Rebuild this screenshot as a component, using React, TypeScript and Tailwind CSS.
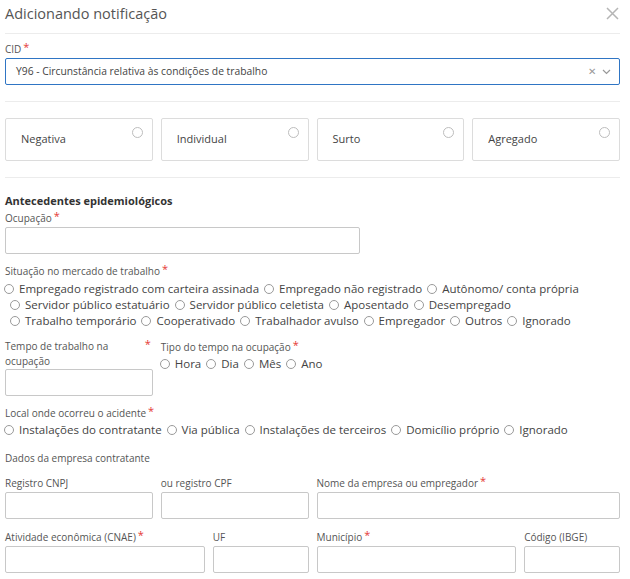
import React from 'react';

const Req = () => <span className="text-[#e53935] text-[11px] align-top relative -top-[3px] ml-[2px]">*</span>;

function Label({ children, req, className = '' }: { children: React.ReactNode; req?: boolean; className?: string }) {
  return (
    <div className={`text-[10px] leading-[13px] text-[#555] ${className || 'mb-[2px]'}`}>
      {children}
      {req && <Req />}
    </div>
  );
}

const Input = ({ className = '' }: { className?: string }) => (
  <div className={`h-[27px] border border-[#c8c8c8] rounded-[2px] bg-white ${className}`} />
);

function Radio({ label }: { label: string }) {
  return (
    <span className="inline-flex items-center mr-[5px]">
      <span className="w-[10px] h-[10px] rounded-full border border-[#9a9a9a] mr-[5px] shrink-0" />
      <span>{label}</span>
    </span>
  );
}

const Divider = () => <div className="h-px bg-[#ececec]" />;

export default function App() {
  const cards = ['Negativa', 'Individual', 'Surto', 'Agregado'];
  return (
    <div className="w-[630px] h-[579px] bg-white overflow-hidden" style={{ fontFamily: '"Open Sans", sans-serif' }}>
      <div className="pl-[5px] pr-[10px]">
        {/* Header */}
        <div className="flex items-center justify-between h-[33px] pb-[6px]">
          <h1 className="text-[14.5px] text-[#555] leading-[20px]">Adicionando notificação</h1>
          <svg width="13" height="13" viewBox="0 0 13 13" className="mr-[1px]">
            <path d="M1 1L12 12M12 1L1 12" stroke="#b5b5b5" strokeWidth="1.5" />
          </svg>
        </div>
        <Divider />

        {/* CID */}
        <div className="pt-[9px]">
          <Label req>CID</Label>
          <div className="h-[27px] border border-[#2f75c4] rounded-[2px] flex items-center pl-[10px] pr-[8px]">
            <span className="flex-1 text-[10.3px] text-[#444]">Y96 - Circunstância relativa às condições de trabalho</span>
            <span className="text-[#999] text-[10px] mr-[6px]">✕</span>
            <svg width="9" height="6" viewBox="0 0 9 6">
              <path d="M1 1L4.5 4.5L8 1" stroke="#999" strokeWidth="1.2" fill="none" />
            </svg>
          </div>
        </div>
        <div className="mt-[16px]">
          <Divider />
        </div>

        {/* Tipo */}
        <div className="grid grid-cols-4 gap-[8px] mt-[16px]">
          {cards.map((c) => (
            <div key={c} className="relative h-[43px] border border-[#dcdcdc] rounded-[2px] flex items-center pl-[15px] text-[11px] text-[#444]">
              {c}
              <span className="absolute right-[9px] top-[8px] w-[11px] h-[11px] rounded-full border border-[#bdbdbd]" />
            </div>
          ))}
        </div>
        <div className="mt-[16px]">
          <Divider />
        </div>

        {/* Antecedentes */}
        <div className="mt-[15px] text-[11px] font-bold text-[#333] leading-[15px]">Antecedentes epidemiológicos</div>
        <div className="grid grid-cols-12 gap-x-[8px] mt-[4px]">
          <div className="col-span-7">
            <Label req>Ocupação</Label>
            <Input />
          </div>
        </div>

        <Label req className="mt-[11px] mb-[3px]">Situação no mercado de trabalho</Label>
        <div className="text-[11.5px] text-[#444] leading-[16px] -ml-[1px]">
          <div className="flex">
            <Radio label="Empregado registrado com carteira assinada" />
            <Radio label="Empregado não registrado" />
            <Radio label="Autônomo/ conta própria" />
          </div>
          <div className="flex pl-[6px]">
            <Radio label="Servidor público estatuário" />
            <Radio label="Servidor público celetista" />
            <Radio label="Aposentado" />
            <Radio label="Desempregado" />
          </div>
          <div className="flex pl-[6px]">
            <Radio label="Trabalho temporário" />
            <Radio label="Cooperativado" />
            <Radio label="Trabalhador avulso" />
            <Radio label="Empregador" />
            <Radio label="Outros" />
            <Radio label="Ignorado" />
          </div>
        </div>

        <div className="grid grid-cols-12 gap-x-[8px] mt-[10px]">
          <div className="col-span-3">
            <div className="flex text-[10px] leading-[15px] text-[#555] h-[30px]">
              <span className="w-[115px]">Tempo de trabalho na ocupação</span>
              <span className="flex-1" />
              <span className="text-[#e53935] text-[11px] relative -top-[3px] mr-[2px]">*</span>
            </div>
            <Input />
          </div>
          <div className="col-span-9">
            <Label req className="mt-[2px] mb-[2px]">Tipo do tempo na ocupação</Label>
            <div className="text-[11.5px] text-[#444] leading-[16px] flex -ml-[1px]">
              <Radio label="Hora" />
              <Radio label="Dia" />
              <Radio label="Mês" />
              <Radio label="Ano" />
            </div>
          </div>
        </div>

        <Label req className="mt-[11px] mb-[2px]">Local onde ocorreu o acidente</Label>
        <div className="text-[11.5px] text-[#444] leading-[16px] flex -ml-[1px]">
          <Radio label="Instalações do contratante" />
          <Radio label="Via pública" />
          <Radio label="Instalações de terceiros" />
          <Radio label="Domicílio próprio" />
          <Radio label="Ignorado" />
        </div>

        <Label className="mt-[14px] mb-[2px]">Dados da empresa contratante</Label>

        <div className="grid grid-cols-12 gap-x-[8px] gap-y-[12px] mt-[12px]">
          <div className="col-span-3">
            <Label>Registro CNPJ</Label>
            <Input />
          </div>
          <div className="col-span-3">
            <Label>ou registro CPF</Label>
            <Input />
          </div>
          <div className="col-span-6">
            <Label req>Nome da empresa ou empregador</Label>
            <Input />
          </div>
          <div className="col-span-4">
            <Label req>Atividade econômica (CNAE)</Label>
            <Input />
          </div>
          <div className="col-span-2">
            <Label>UF</Label>
            <Input />
          </div>
          <div className="col-span-4">
            <Label req>Município</Label>
            <Input />
          </div>
          <div className="col-span-2">
            <Label>Código (IBGE)</Label>
            <Input />
          </div>
        </div>
      </div>
    </div>
  );
}
